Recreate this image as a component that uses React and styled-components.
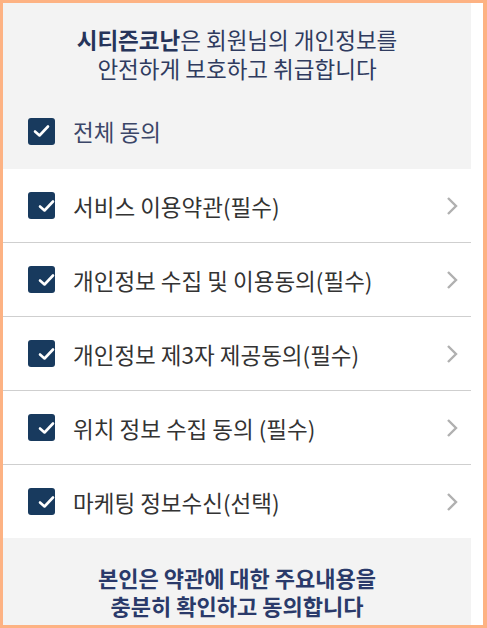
import React from "react";
import styled, { createGlobalStyle } from "styled-components";

const Global = createGlobalStyle`
  html, body { margin: 0; padding: 0; background: #ffffff; }
  body { font-family: "Noto Sans CJK KR", "Noto Sans", sans-serif; }
`;

const items = [
  "서비스 이용약관(필수)",
  "개인정보 수집 및 이용동의(필수)",
  "개인정보 제3자 제공동의(필수)",
  "위치 정보 수집 동의 (필수)",
  "마케팅 정보수신(선택)",
];

function CheckBox() {
  return (
    <Box>
      <svg width="17" height="14" viewBox="0 0 17 14">
        <path d="M2 7.5 L6.5 11.5 L15 2.5" fill="none" stroke="#fff" strokeWidth="2.6" strokeLinecap="round" strokeLinejoin="round" />
      </svg>
    </Box>
  );
}

function Chevron() {
  return (
    <svg width="12" height="20" viewBox="0 0 12 20">
      <path d="M2 2 L10 10 L2 18" fill="none" stroke="#b0b0b0" strokeWidth="2.4" />
    </svg>
  );
}

export default function App() {
  return (
    <Frame>
      <Global />
      <Panel>
        <Header>
          <Headline>
            <strong>시티즌코난</strong>은 회원님의 개인정보를
            <br />
            안전하게 보호하고 취급합니다
          </Headline>
          <AllRow>
            <CheckBox />
            <AllLabel>전체 동의</AllLabel>
          </AllRow>
        </Header>
        <List>
          {items.map((t) => (
            <Row key={t}>
              <CheckBox />
              <Label>{t}</Label>
              <Chevron />
            </Row>
          ))}
        </List>
        <Footer>
          본인은 약관에 대한 주요내용을
          <br />
          충분히 확인하고 동의합니다
        </Footer>
      </Panel>
    </Frame>
  );
}

const Frame = styled.div`
  box-sizing: border-box;
  width: 487px;
  height: 628px;
  border: 3px solid #fdb283;
  border-right-width: 4px;
  padding-right: 12px;
  background: #ffffff;
  overflow: hidden;
`;

const Panel = styled.div`
  width: 468px;
  height: 100%;
  background: #f3f3f3;
  display: flex;
  flex-direction: column;
`;

const Header = styled.div`
  height: 166px;
  box-sizing: border-box;
  padding-top: 22px;
`;

const Headline = styled.div`
  text-align: center;
  font-size: 22.5px;
  line-height: 29px;
  color: #2f3b5f;
  strong { font-weight: 700; color: #26345a; }
`;

const AllRow = styled.div`
  display: flex;
  align-items: center;
  padding-left: 25px;
  margin-top: 32px;
`;

const AllLabel = styled.span`
  margin-left: 18px;
  font-size: 22.5px;
  color: #3b4668;
`;

const Box = styled.span`
  width: 27px;
  height: 27px;
  border-radius: 3px;
  background: #183a5e;
  display: flex;
  align-items: center;
  justify-content: center;
  flex-shrink: 0;
`;

const List = styled.div`
  background: #ffffff;
`;

const Row = styled.div`
  height: 73px;
  display: flex;
  align-items: center;
  padding: 0 13px 0 25px;
  & + & { border-top: 1px solid #cfcfcf; }
  svg:last-child { margin-left: auto; }
`;

const Label = styled.span`
  margin-left: 18px;
  font-size: 22.5px;
  color: #333333;
`;

const Footer = styled.div`
  flex: 1;
  text-align: center;
  padding-top: 25px;
  font-size: 22px;
  line-height: 28px;
  font-weight: 700;
  color: #2a3a6a;
`;
